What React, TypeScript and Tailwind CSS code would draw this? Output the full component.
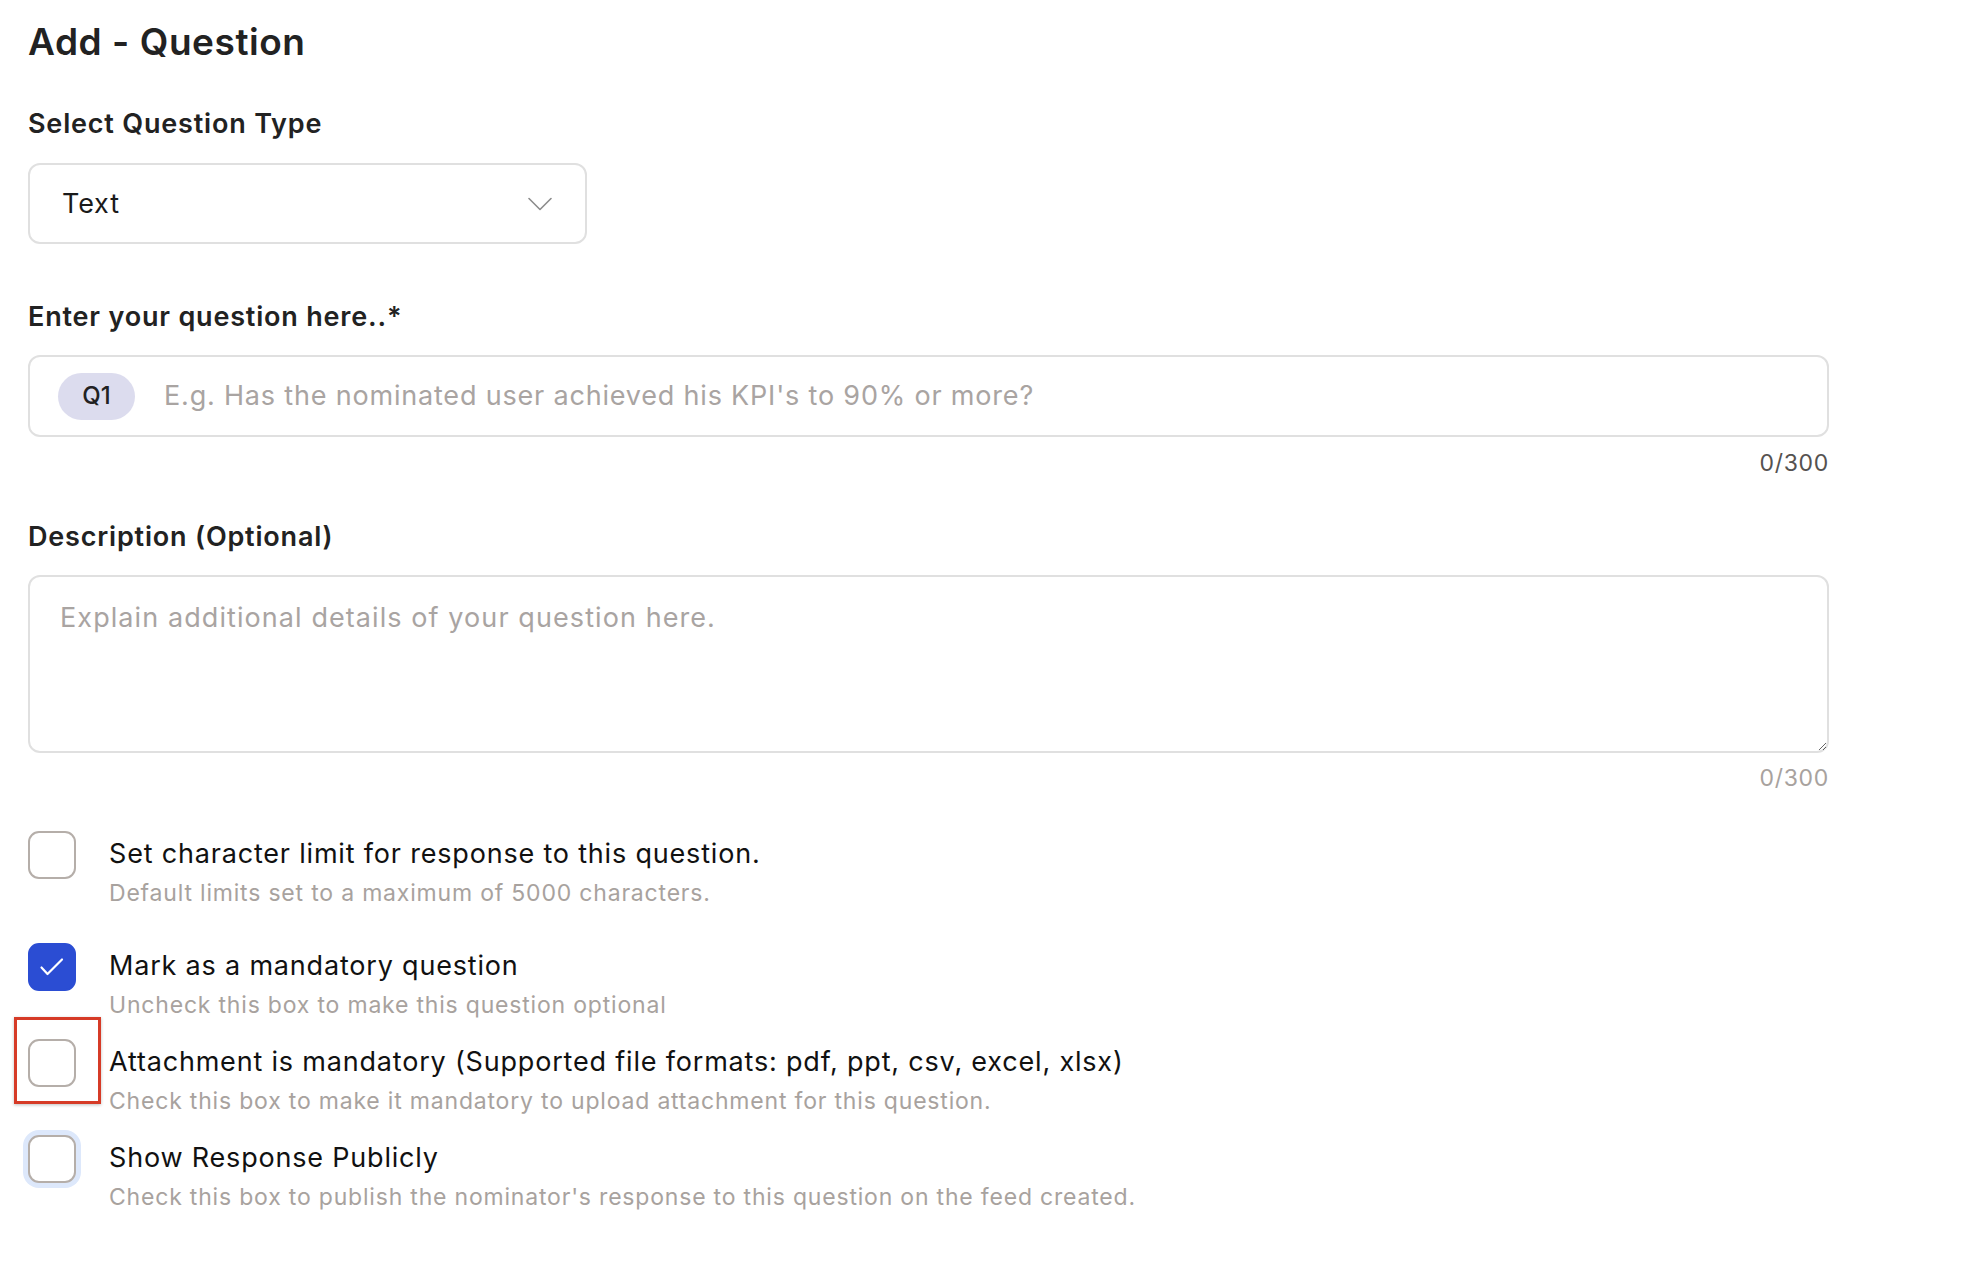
import React from "react";

function Check({ checked = false, focus = false }: { checked?: boolean; focus?: boolean }) {
  return (
    <div
      className={
        "w-[48px] h-[48px] shrink-0 rounded-[11px] flex items-center justify-center " +
        (checked
          ? "bg-[#2b4dd3] border-2 border-[#2b4dd3]"
          : "bg-white border-2 border-[#b5aea9]") +
        (focus ? " ring-[5px] ring-[#dde8fb]" : "")
      }
    >
      {checked && (
        <svg width="48" height="48" viewBox="0 0 48 48" fill="none" className="-m-[2px]">
          <path d="M13.5 24.5 L19.5 31 L34 16.5" stroke="white" strokeWidth="2.2" strokeLinecap="round" strokeLinejoin="round" />
        </svg>
      )}
    </div>
  );
}

function Row({
  title,
  sub,
  checked,
  focus,
  marked,
  className,
}: {
  title: string;
  sub: string;
  checked?: boolean;
  focus?: boolean;
  marked?: boolean;
  className?: string;
}) {
  return (
    <div className={"flex items-start gap-[33px] " + (className ?? "")}>
      <div className="relative">
        {marked && (
          <div className="absolute left-[-14px] top-[-22px] w-[87px] h-[87px] border-[3px] border-[#d63b27] shadow-[0_1px_3px_rgba(0,0,0,0.25)]" />
        )}
        <Check checked={checked} focus={focus} />
      </div>
      <div className="flex flex-col">
        <div className="mt-[7px] text-[27px] leading-[32px] text-[#111111] tracking-[0.03em]">{title}</div>
        <div className="mt-[9px] text-[23px] leading-[28px] text-[#a8a29e] tracking-[0.035em]">{sub}</div>
      </div>
    </div>
  );
}

export default function App() {
  return (
    <div className="min-h-screen w-full bg-white font-['Inter',sans-serif] text-[#1f1f1f]">
      <div className="pl-[28px] pt-[20px] w-[1829px] flex flex-col">
        <h1 className="text-[37px] leading-[44px] font-semibold text-[#222222] tracking-[0.015em]">Add - Question</h1>

        <div className="mt-[44px] text-[27px] leading-[32px] font-semibold text-[#222222] tracking-[0.03em]">Select Question Type</div>
        <div className="mt-[23px] w-[559px] h-[81px] border-2 border-[#e0e0e0] rounded-[12px] flex items-center justify-between pl-[32px] pr-[33px]">
          <span className="text-[27px] leading-[32px] text-[#1a1a1a] tracking-[0.03em]">Text</span>
          <svg width="24" height="14" viewBox="0 0 24 14" fill="none">
            <path d="M1 1.5 L12 12.5 L23 1.5" stroke="#8c8c8c" strokeWidth="1.6" strokeLinecap="round" strokeLinejoin="round" />
          </svg>
        </div>

        <div className="mt-[57px] text-[27px] leading-[32px] font-semibold text-[#222222] tracking-[0.03em]">Enter your question here..*</div>
        <div className="mt-[22px] h-[82px] border-2 border-[#e0e0e0] rounded-[12px] flex items-center pl-[28px]">
          <div className="w-[77px] h-[47px] rounded-full bg-[#dcdcee] flex items-center justify-center text-[24px] font-medium text-[#222222]">
            Q1
          </div>
          <span className="ml-[29px] text-[27px] leading-[32px] text-[#a9a4a2] tracking-[0.03em]">
            E.g. Has the nominated user achieved his KPI's to 90% or more?
          </span>
        </div>
        <div className="mt-[12px] self-end text-[23px] leading-[28px] text-[#555250] tracking-[0.03em]">0/300</div>

        <div className="mt-[44px] text-[27px] leading-[32px] font-semibold text-[#222222] tracking-[0.03em]">Description (Optional)</div>
        <textarea
          className="mt-[22px] h-[178px] w-full border-2 border-[#e0e0e0] rounded-[12px] pl-[30px] pt-[25px] text-[27px] leading-[32px] text-[#1a1a1a] placeholder:text-[#a9a4a2] outline-none resize-y font-['Inter',sans-serif] tracking-[0.04em]"
          placeholder="Explain additional details of your question here."
        />
        <div className="mt-[11px] self-end text-[23px] leading-[28px] text-[#a8a29e] tracking-[0.03em]">0/300</div>

        <div className="mt-[39px] flex flex-col">
          <Row
            title="Set character limit for response to this question."
            sub="Default limits set to a maximum of 5000 characters."
          />
          <Row
            className="mt-[36px]"
            checked
            title="Mark as a mandatory question"
            sub="Uncheck this box to make this question optional"
          />
          <Row
            className="mt-[20px]"
            marked
            title="Attachment is mandatory (Supported file formats: pdf, ppt, csv, excel, xlsx)"
            sub="Check this box to make it mandatory to upload attachment for this question."
          />
          <Row
            className="mt-[20px]"
            focus
            title="Show Response Publicly"
            sub="Check this box to publish the nominator's response to this question on the feed created."
          />
        </div>
      </div>
    </div>
  );
}
